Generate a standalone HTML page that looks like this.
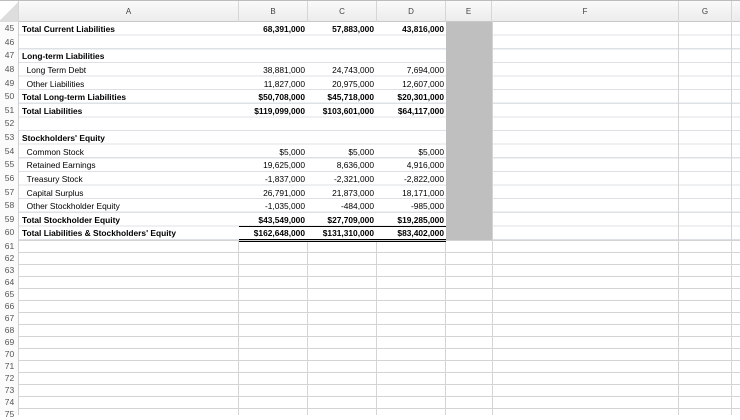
<!DOCTYPE html>
<html><head><style>
body{margin:0;width:740px;height:415px;overflow:hidden;background:#fff;font-family:"Liberation Sans",Arial,sans-serif;position:relative}
.a{position:absolute}
.hdr{top:0;left:0;width:740px;height:22px;background:linear-gradient(#fafafa,#ececec);border-bottom:1px solid #c8c8c8;border-top:1px solid #bdbdbd;box-sizing:border-box}
.hc{position:absolute;top:0;height:21px;line-height:21px;text-align:center;font-size:8px;color:#444;border-right:1px solid #d6d6d6;box-sizing:border-box}
.rn{position:absolute;left:0;width:19px;font-size:9px;color:#555;text-align:center;border-right:1px solid #d0d0d0;box-sizing:border-box;background:#fbfbfb}
.vl{position:absolute;width:1px;background:#d4d4d4}
.n{text-align:right}
</style></head><body>
<div class="a hdr">
<div class="hc" style="left:0;width:19px;background:linear-gradient(135deg,#fff 50%,#ddd 50%)"></div>
<div class="hc" style="left:19px;width:220px">A</div>
<div class="hc" style="left:239px;width:69px">B</div>
<div class="hc" style="left:308px;width:69px">C</div>
<div class="hc" style="left:377px;width:69px">D</div>
<div class="hc" style="left:446px;width:46px">E</div>
<div class="hc" style="left:492px;width:187px">F</div>
<div class="hc" style="left:679px;width:53px">G</div>
</div>
<div class="a" style="left:19px;top:22px;width:721px;height:218px;background:repeating-linear-gradient(to bottom,transparent 0,transparent 12.6px,#dde1e5 12.6px,#dde1e5 13.625px);"></div>
<div class="a" style="left:446px;top:22px;width:46px;height:218px;background:#bfbfbf"></div>
<div class="a" style="left:19px;top:240px;width:721px;height:175px;background:repeating-linear-gradient(to bottom,#d4d4d4 0,#d4d4d4 1px,transparent 1px,transparent 12px);"></div>
<div class="vl" style="left:238px;top:240px;height:175px"></div>
<div class="vl" style="left:307px;top:240px;height:175px"></div>
<div class="vl" style="left:376px;top:240px;height:175px"></div>
<div class="vl" style="left:445px;top:240px;height:175px"></div>
<div class="vl" style="left:492px;top:22px;height:393px"></div>
<div class="vl" style="left:678px;top:22px;height:393px"></div>
<div class="vl" style="left:731px;top:22px;height:393px"></div>
<div class="rn" style="top:22px;height:393px"></div>
<div class="a" style="left:0;top:22px;width:19px;font-size:8.5px;color:#555;line-height:13.625px;text-align:center">45<br>46<br>47<br>48<br>49<br>50<br>51<br>52<br>53<br>54<br>55<br>56<br>57<br>58<br>59<br>60</div>
<div class="a" style="left:0;top:240px;width:19px;font-size:8.5px;color:#555;line-height:12px;text-align:center">61<br>62<br>63<br>64<br>65<br>66<br>67<br>68<br>69<br>70<br>71<br>72<br>73<br>74<br>75</div>
<div class="a" style="left:22px;top:23px;font-size:8.4px;line-height:13.625px;white-space:nowrap">
<b>Total Current Liabilities</b><br>&nbsp;<br><b>Long-term Liabilities</b><br>&nbsp;&nbsp;Long Term Debt<br>&nbsp;&nbsp;Other Liabilities<br><b>Total Long-term Liabilities</b><br><b>Total Liabilities</b><br>&nbsp;<br><b>Stockholders' Equity</b><br>&nbsp;&nbsp;Common Stock<br>&nbsp;&nbsp;Retained Earnings<br>&nbsp;&nbsp;Treasury Stock<br>&nbsp;&nbsp;Capital Surplus<br>&nbsp;&nbsp;Other Stockholder Equity<br><b>Total Stockholder Equity</b><br><b>Total Liabilities &amp; Stockholders' Equity</b></div>
<div class="a n" style="left:239px;width:66px;top:23px;font-size:8.4px;line-height:13.625px">
<b>68,391,000</b><br>&nbsp;<br>&nbsp;<br>38,881,000<br>11,827,000<br><b>$50,708,000</b><br><b>$119,099,000</b><br>&nbsp;<br>&nbsp;<br>$5,000<br>19,625,000<br>-1,837,000<br>26,791,000<br>-1,035,000<br><b>$43,549,000</b><br><b>$162,648,000</b></div>
<div class="a n" style="left:308px;width:66px;top:23px;font-size:8.4px;line-height:13.625px">
<b>57,883,000</b><br>&nbsp;<br>&nbsp;<br>24,743,000<br>20,975,000<br><b>$45,718,000</b><br><b>$103,601,000</b><br>&nbsp;<br>&nbsp;<br>$5,000<br>8,636,000<br>-2,321,000<br>21,873,000<br>-484,000<br><b>$27,709,000</b><br><b>$131,310,000</b></div>
<div class="a n" style="left:377px;width:67px;top:23px;font-size:8.4px;line-height:13.625px">
<b>43,816,000</b><br>&nbsp;<br>&nbsp;<br>7,694,000<br>12,607,000<br><b>$20,301,000</b><br><b>$64,117,000</b><br>&nbsp;<br>&nbsp;<br>$5,000<br>4,916,000<br>-2,822,000<br>18,171,000<br>-985,000<br><b>$19,285,000</b><br><b>$83,402,000</b></div>
<div class="a" style="left:239px;top:226px;width:207px;height:1px;background:#000"></div>
<div class="a" style="left:239px;top:239px;width:207px;height:1px;background:#000"></div>
<div class="a" style="left:239px;top:241px;width:207px;height:1px;background:#000"></div>
</body></html>
